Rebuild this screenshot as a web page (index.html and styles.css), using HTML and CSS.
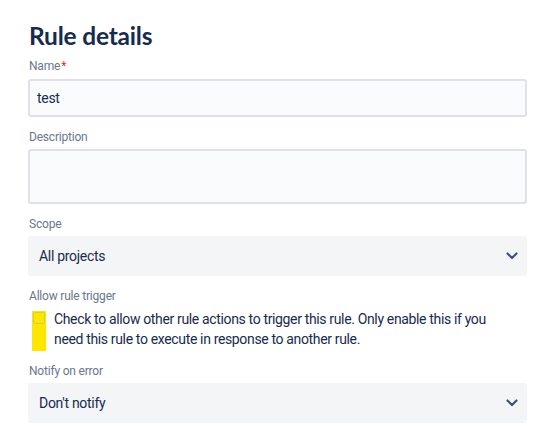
FILE: index.html
```
<!DOCTYPE html>
<html>
<head>
<meta charset="utf-8">
<link rel="stylesheet" href="styles.css">
</head>
<body>
<div class="page">
  <h1 class="title">Rule details</h1>
  <div class="field first">
    <div class="label">Name<span class="req">*</span></div>
    <div class="input">test</div>
  </div>
  <div class="field">
    <div class="label">Description</div>
    <div class="textarea"></div>
  </div>
  <div class="field">
    <div class="label">Scope</div>
    <div class="select"><span>All projects</span>
      <svg class="chev" width="12" height="8" viewBox="0 0 12 8"><path d="M1.5 1.5 L6 6 L10.5 1.5" fill="none" stroke="#42526e" stroke-width="2.2" stroke-linecap="round" stroke-linejoin="round"/></svg>
    </div>
  </div>
  <div class="field">
    <div class="label">Allow rule trigger</div>
    <div class="check-row">
      <div class="highlight"><div class="box"></div></div>
      <div class="check-text">Check to allow other rule actions to trigger this rule. Only enable this if you need this rule to execute in response to another rule.</div>
    </div>
  </div>
  <div class="field">
    <div class="label">Notify on error</div>
    <div class="select"><span>Don't notify</span>
      <svg class="chev" width="12" height="8" viewBox="0 0 12 8"><path d="M1.5 1.5 L6 6 L10.5 1.5" fill="none" stroke="#42526e" stroke-width="2.2" stroke-linecap="round" stroke-linejoin="round"/></svg>
    </div>
  </div>
</div>
</body>
</html>
```
FILE: styles.css
```
html, body {
  margin: 0;
  padding: 0;
  background: #ffffff;
}
body {
  font-family: Roboto, "Noto Sans", sans-serif;
  color: #172b4d;
}
.page {
  width: 499px;
  padding: 22px 0 0 28px;
}
.title {
  margin: 0;
  font-family: Lato, Roboto, sans-serif;
  font-size: 24.5px;
  line-height: 28px;
  font-weight: 700;
  color: #172b4d;
  padding-left: 1px;
  letter-spacing: -0.2px;
}
.field {
  margin-top: 12px;
}
.field.first {
  margin-top: 8px;
}
.label {
  font-size: 12px;
  line-height: 16px;
  color: #6b778c;
  margin-bottom: 4px;
  padding-left: 1px;
  letter-spacing: -0.2px;
}
.first .label {
  margin-bottom: 5px;
}
.req {
  color: #de350b;
  padding-left: 1px;
}
.input {
  box-sizing: border-box;
  height: 38px;
  border: 2px solid #dfe1e6;
  border-radius: 3px;
  background: #fafbfc;
  font-size: 14px;
  line-height: 34px;
  padding-left: 7px;
  color: #172b4d;
  letter-spacing: -0.3px;
}
.textarea {
  box-sizing: border-box;
  height: 55px;
  border: 2px solid #dfe1e6;
  border-radius: 3px;
  background: #fafbfc;
}
.select {
  box-sizing: border-box;
  height: 40px;
  border-radius: 3px;
  background: #f4f5f7;
  display: flex;
  align-items: center;
  justify-content: space-between;
  padding: 0 9px 0 11px;
  font-size: 14px;
  color: #172b4d;
  letter-spacing: -0.3px;
}
.chev {
  display: block;
}
.check-row {
  display: flex;
  align-items: flex-start;
  margin-top: 5px;
}
.highlight {
  width: 14px;
  height: 40px;
  background: #ffe600;
  margin-left: 4px;
  margin-top: 2px;
  flex: none;
  box-sizing: border-box;
  padding: 1px;
}
.box {
  width: 12px;
  height: 12px;
  box-sizing: border-box;
  border: 1.5px solid rgba(180, 180, 150, 0.55);
  border-radius: 2px;
}
.check-text {
  margin-left: 8px;
  font-size: 14px;
  line-height: 20px;
  color: #172b4d;
  letter-spacing: -0.35px;
  width: 450px;
}
```
